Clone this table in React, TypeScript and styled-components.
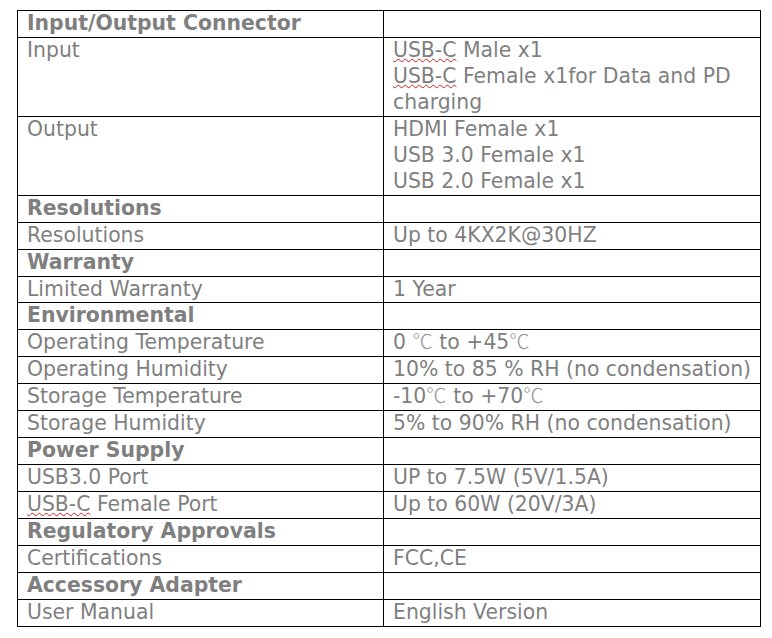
import React from "react";
import styled, { createGlobalStyle } from "styled-components";

const Global = createGlobalStyle`
  html, body { margin: 0; padding: 0; background: #fff; }
  body { font-family: "DejaVu Sans", Verdana, sans-serif; }
`;

const Page = styled.div`
  padding: 10px 0 0 17px;
`;

const Table = styled.table`
  border-collapse: collapse;
  width: 743px;
  table-layout: fixed;
  font-family: "DejaVu Sans", Verdana, sans-serif;
  font-size: 20.4px;
  line-height: 25.95px;
  color: #7f7f7f;
`;

const Cell = styled.td<{ $bold?: boolean }>`
  border: 1px solid #000;
  padding: 0 6px 0 9px;
  vertical-align: top;
  font-weight: ${(p) => (p.$bold ? 700 : 400)};
  white-space: nowrap;
`;

const WrapCell = styled(Cell)`
  white-space: normal;
`;

const Spell = styled.span`
  text-decoration-line: underline;
  text-decoration-style: wavy;
  text-decoration-color: #d02020;
  text-decoration-thickness: 1px;
  text-underline-offset: 1px;
`;

const Deg = styled.span`
  font-family: "Noto Sans CJK SC", sans-serif;
  font-weight: 300;
  line-height: 1;
  color: #9a9a9a;
`;

type Row = { h?: string; k?: React.ReactNode; v?: React.ReactNode };

const rows: Row[] = [
  { h: "Input/Output Connector" },
  {
    k: "Input",
    v: (
      <>
        <Spell>USB-C</Spell> Male x1
        <br />
        <Spell>USB-C</Spell> Female x1for Data and PD charging
      </>
    ),
  },
  {
    k: "Output",
    v: (
      <>
        HDMI Female x1
        <br />
        USB 3.0 Female x1
        <br />
        USB 2.0 Female x1
      </>
    ),
  },
  { h: "Resolutions" },
  { k: "Resolutions", v: "Up to 4KX2K@30HZ" },
  { h: "Warranty" },
  { k: "Limited Warranty", v: "1 Year" },
  { h: "Environmental" },
  {
    k: "Operating Temperature",
    v: (
      <>
        0 <Deg>℃</Deg> to +45<Deg>℃</Deg>
      </>
    ),
  },
  { k: "Operating Humidity", v: "10% to 85 % RH (no condensation)" },
  {
    k: "Storage Temperature",
    v: (
      <>
        -10<Deg>℃</Deg> to +70<Deg>℃</Deg>
      </>
    ),
  },
  { k: "Storage Humidity", v: "5% to 90% RH (no condensation)" },
  { h: "Power Supply" },
  { k: "USB3.0 Port", v: "UP to 7.5W (5V/1.5A)" },
  {
    k: (
      <>
        <Spell>USB-C</Spell> Female Port
      </>
    ),
    v: "Up to 60W (20V/3A)",
  },
  { h: "Regulatory Approvals" },
  { k: "Certifications", v: "FCC,CE" },
  { h: "Accessory Adapter" },
  { k: "User Manual", v: "English Version" },
];

export default function App() {
  return (
    <>
      <Global />
      <Page>
        <Table>
          <colgroup>
            <col style={{ width: 366 }} />
            <col style={{ width: 377 }} />
          </colgroup>
          <tbody>
            {rows.map((r, i) =>
              r.h ? (
                <tr key={i}>
                  <Cell $bold>{r.h}</Cell>
                  <Cell />
                </tr>
              ) : (
                <tr key={i}>
                  <Cell>{r.k}</Cell>
                  <WrapCell>{r.v}</WrapCell>
                </tr>
              )
            )}
          </tbody>
        </Table>
      </Page>
    </>
  );
}
